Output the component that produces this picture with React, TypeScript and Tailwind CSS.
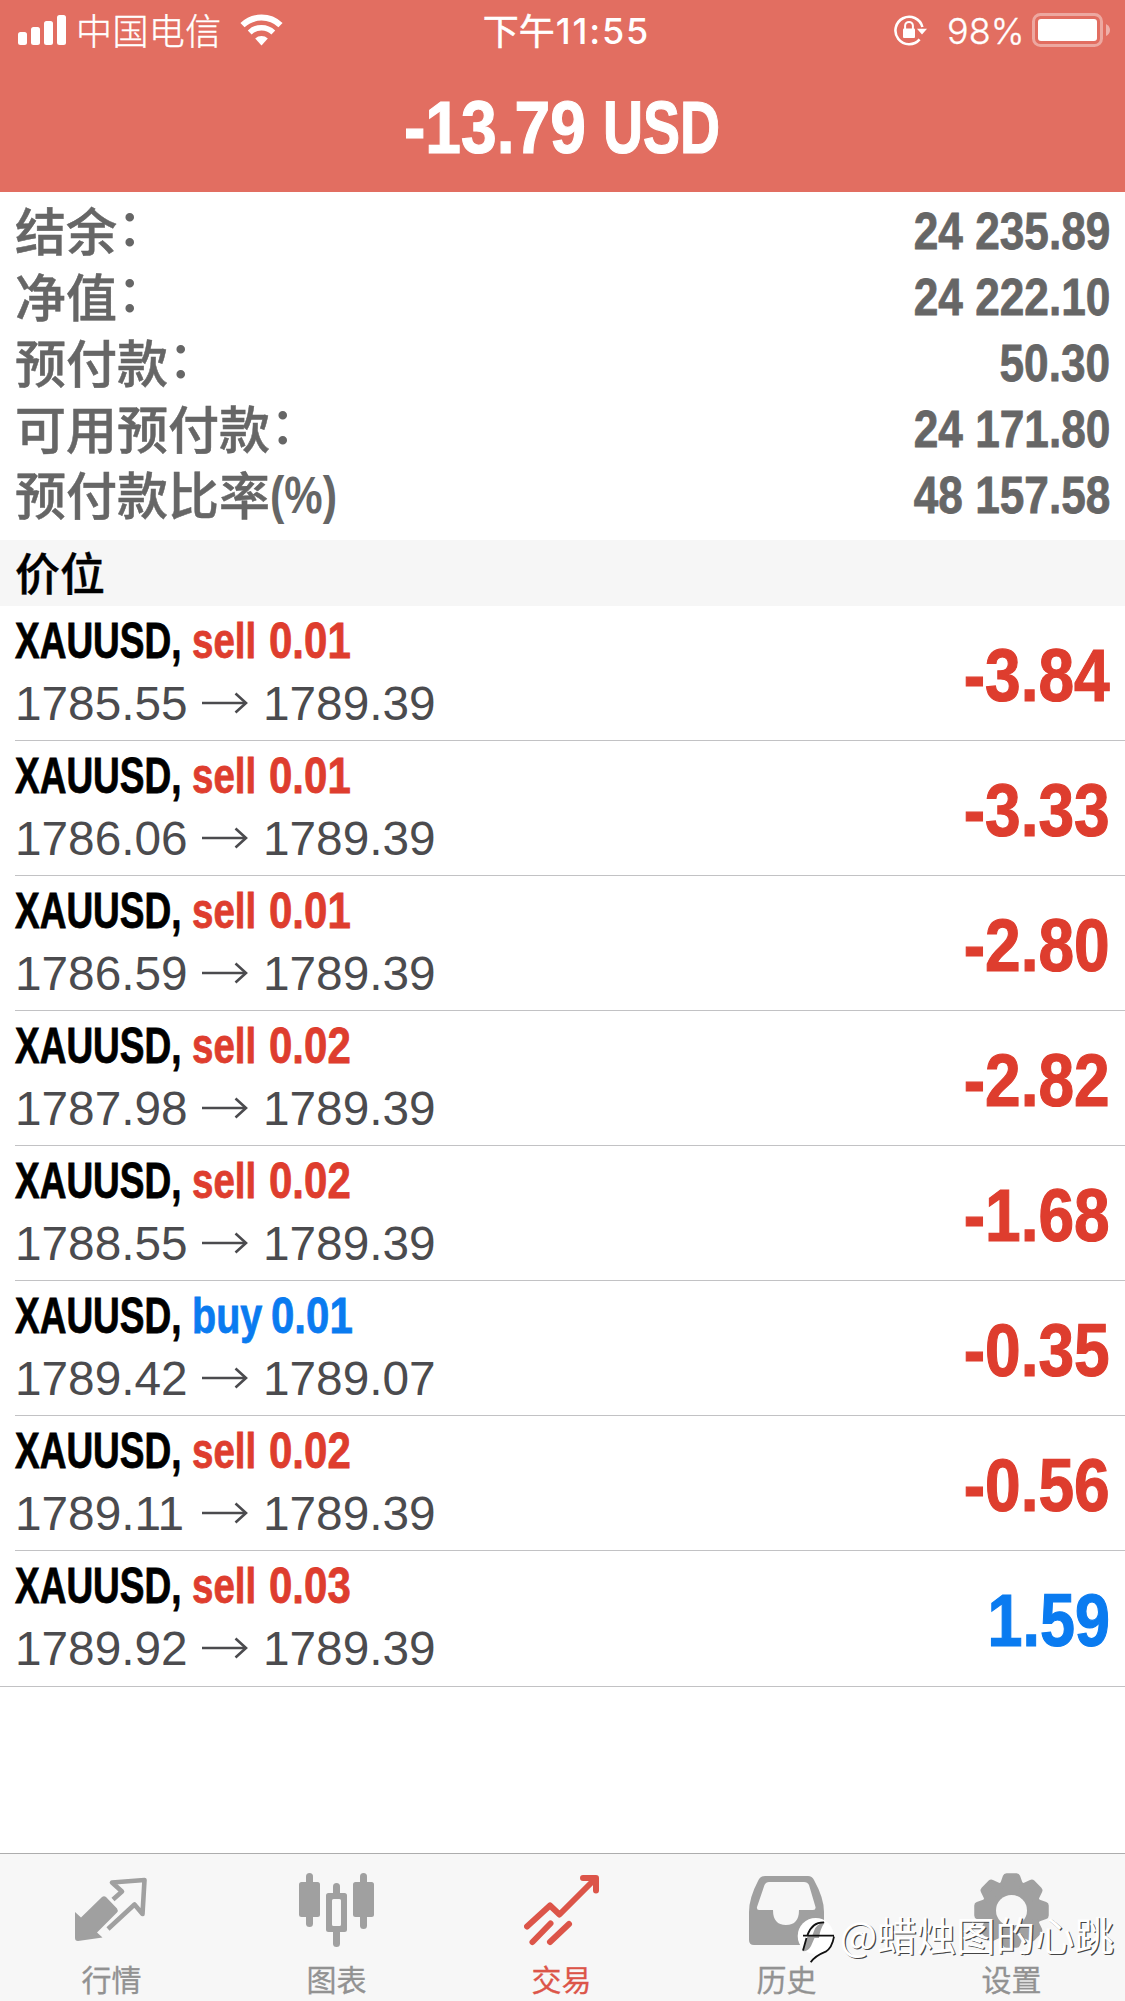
import React from "react";
import clsx from "clsx";

type Side = "sell" | "buy";

interface Position {
  side: Side;
  volume: string;
  open: string;
  current: string;
  profit: string;
}

const SUMMARY = [
  { label: "结余", suffix: "：", value: "24 235.89" },
  { label: "净值", suffix: "：", value: "24 222.10" },
  { label: "预付款", suffix: "：", value: "50.30" },
  { label: "可用预付款", suffix: "：", value: "24 171.80" },
  { label: "预付款比率", suffix: "(%)", value: "48 157.58" },
];

const POSITIONS: Position[] = [
  { side: "sell", volume: "0.01", open: "1785.55", current: "1789.39", profit: "-3.84" },
  { side: "sell", volume: "0.01", open: "1786.06", current: "1789.39", profit: "-3.33" },
  { side: "sell", volume: "0.01", open: "1786.59", current: "1789.39", profit: "-2.80" },
  { side: "sell", volume: "0.02", open: "1787.98", current: "1789.39", profit: "-2.82" },
  { side: "sell", volume: "0.02", open: "1788.55", current: "1789.39", profit: "-1.68" },
  { side: "buy", volume: "0.01", open: "1789.42", current: "1789.07", profit: "-0.35" },
  { side: "sell", volume: "0.02", open: "1789.11", current: "1789.39", profit: "-0.56" },
  { side: "sell", volume: "0.03", open: "1789.92", current: "1789.39", profit: "1.59" },
];

const StatusBar = () => (
  <div className="flex h-[60px] items-start justify-between pt-[13px]">
    <div className="flex w-[400px] items-start pl-[18px]">
      <svg width="49" height="34" viewBox="0 0 49 34" fill="#fff">
        <rect x="0" y="19" width="9" height="13" rx="2.5" />
        <rect x="13" y="14" width="9" height="18" rx="2.5" />
        <rect x="26" y="8" width="9" height="24" rx="2.5" />
        <rect x="39" y="2" width="9" height="30" rx="2.5" />
      </svg>
      <span className="-mt-[2px] ml-[9px] text-[36px] font-light leading-[36px] tracking-[0.4px] [-webkit-text-stroke:0.4px]">
        中国电信
      </span>
      <svg className="ml-[18px]" width="43" height="34" viewBox="0 0 43 34">
        <path d="M2.5 12.2 A27.5 27.5 0 0 1 40.5 12.2" stroke="#fff" strokeWidth="6" fill="none" />
        <path d="M9.7 19.4 A17 17 0 0 1 33.3 19.4" stroke="#fff" strokeWidth="5.5" fill="none" />
        <path d="M21.5 32.5 L15.2 25.6 A9.2 9.2 0 0 1 27.8 25.6 Z" fill="#fff" />
      </svg>
    </div>
    <div className="flex items-start pl-[8px] leading-[36px]">
      <span className="-mt-[2px] text-[36px] [-webkit-text-stroke:0.5px]">下午</span>
      <span className="ml-px font-['Inter'] text-[36px] font-medium tracking-[1.8px]">11:55</span>
    </div>
    <div className="flex w-[400px] items-start justify-end pr-[14px]">
      <svg width="36" height="34" viewBox="0 0 36 34">
        <path d="M26.6 26.4 A13.7 13.7 0 1 1 29.4 14" stroke="#fff" strokeWidth="2.6" fill="none" />
        <path d="M24 15.8 H34 L29 21.5 Z" fill="#fff" />
        <rect x="10" y="15.5" width="12" height="9.5" rx="1" fill="#fff" />
        <path d="M12.1 16 V12.8 A3.9 3.9 0 0 1 19.9 12.8 V16" stroke="#fff" strokeWidth="2" fill="none" />
      </svg>
      <span className="ml-[18px] w-[78px] font-['Inter'] text-[36px] font-light leading-[36px] [-webkit-text-stroke:0.3px]">
        98%
      </span>
      <svg className="ml-[7px]" width="79" height="34" viewBox="0 0 79 34">
        <rect x="1.5" y="1.5" width="68" height="31" rx="7" stroke="#fff" strokeOpacity="0.4" strokeWidth="3" fill="none" />
        <rect x="6" y="6" width="59" height="22" rx="3" fill="#fff" />
        <path d="M74 11 Q78 13 78 17 Q78 21 74 23 Z" fill="#fff" fillOpacity="0.45" />
      </svg>
    </div>
  </div>
);

const Header = () => (
  <header className="h-[192px] shrink-0 bg-[#e26e61] text-white">
    <StatusBar />
    <div className="flex h-[134px] justify-start pl-[404px] font-['Liberation_Sans'] text-[75px] font-bold leading-[134px] [-webkit-text-stroke:1.2px]">
      <span className="w-[199px] origin-left scale-x-[0.855] whitespace-nowrap">-13.79</span>
      <span className="origin-left scale-x-[0.74] whitespace-nowrap">USD</span>
    </div>
  </header>
);

const Summary = () => (
  <section className="h-[348px] shrink-0 pt-[6px] text-[#666]">
    {SUMMARY.map((row) => (
      <div key={row.label} className="flex h-[66px] items-start justify-between px-[15px]">
        <div className="flex whitespace-nowrap text-[51px] font-medium">
          <span className="leading-[63px] [-webkit-text-stroke:0.5px]">{row.label}</span>
          {row.suffix === "：" ? (
            <span className="leading-[53px]">：</span>
          ) : (
            <span className="origin-left scale-x-[0.845] font-['Liberation_Sans'] font-bold leading-[67px]">
              {row.suffix}
            </span>
          )}
        </div>
        <span className="origin-right scale-x-[0.85] font-['Liberation_Sans'] text-[52px] font-bold leading-[66px] [-webkit-text-stroke:0.8px]">
          {row.value}
        </span>
      </div>
    ))}
  </section>
);

const PositionRow = ({ position, last }: { position: Position; last: boolean }) => {
  const profitable = !position.profit.startsWith("-");
  return (
    <li className={clsx(last ? "h-[136px]" : "h-[135px] pl-[15px]")}>
      <div
        className={clsx(
          "flex h-full justify-between border-b border-[#c2c2c4] pr-[15px] font-['Liberation_Sans']",
          last && "pl-[15px]"
        )}
      >
        <div className="pt-[6px]">
          <div className="flex h-[58px] whitespace-nowrap text-[50px] font-bold leading-[58px] [-webkit-text-stroke:0.8px]">
            <span className="w-[177px] origin-left scale-x-[0.74] text-black">XAUUSD,</span>
            <span
              className={clsx(
                "origin-left",
                position.side === "buy"
                  ? "w-[79px] scale-x-[0.79] text-[#0a7bf0]"
                  : "w-[77px] scale-x-[0.77] text-[#de3d2e]"
              )}
            >
              {position.side}
            </span>
            <span
              className={clsx(
                "origin-left scale-x-[0.84]",
                position.side === "buy" ? "text-[#0a7bf0]" : "text-[#de3d2e]"
              )}
            >
              {position.volume}
            </span>
          </div>
          <div className="mt-[4px] flex h-[60px] items-center text-[48px] leading-[60px] text-[#4b4b4e]">
            <span className="w-[187px] origin-left scale-x-[0.995]">{position.open}</span>
            <svg className="-mt-[2px]" width="46" height="22" viewBox="0 0 46 22" fill="none" stroke="#4b4b4e" strokeWidth="2.6">
              <path d="M0 11 H44" />
              <path d="M33.5 1.5 L44 11 L33.5 20.5" />
            </svg>
            <span className="ml-[15px] origin-left scale-x-[0.995]">{position.current}</span>
          </div>
        </div>
        <span
          className={clsx(
            "origin-right text-[74px] font-bold leading-[139px] [-webkit-text-stroke:1.2px]",
            profitable ? "scale-x-[0.85] text-[#0a7bf0]" : "scale-x-[0.865] text-[#de3d2e]"
          )}
        >
          {position.profit}
        </span>
      </div>
    </li>
  );
};

const QuotesIcon = () => (
  <svg width="75" height="75" viewBox="-1 0 75 75" fill="none">
    <path d="M0 39 L6 44.5 L27 24 Q29 22.5 31 24 L42 35.5 Q43.5 37.5 42 39.5 L22 59.5 L27.5 64.5 L3 68 Q0 68 0 65 Z" fill="#a0a0a0" />
    <path d="M38 26.5 L47 18.5 L37 9.5 L69.5 7 L67.5 41 L59.5 31.5 L33 56" stroke="#a0a0a0" strokeWidth="4.6" strokeLinejoin="round" />
  </svg>
);

const ChartIcon = () => (
  <svg width="75" height="75" viewBox="0 0 75 75" fill="#a0a0a0">
    <rect x="7" y="0" width="7" height="54" rx="3.5" />
    <rect x="0" y="9" width="21" height="35" rx="2.5" />
    <rect x="34" y="10" width="7" height="14" rx="3.5" />
    <rect x="34" y="55" width="7" height="19" rx="3.5" />
    <path
      fillRule="evenodd"
      d="M29.5 20 H45.5 Q48 20 48 22.5 V56.5 Q48 59 45.5 59 H29.5 Q27 59 27 56.5 V22.5 Q27 20 29.5 20 Z M33 27.5 V51.5 Q33 53 34.5 53 H40.5 Q42 53 42 51.5 V27.5 Q42 26 40.5 26 H34.5 Q33 26 33 27.5 Z"
    />
    <rect x="61" y="0" width="7" height="56" rx="3.5" />
    <rect x="54" y="9" width="21" height="35" rx="2.5" />
  </svg>
);

const TradeIcon = () => (
  <svg width="75" height="75" viewBox="0 0 75 75" fill="none" stroke="#dc5549" strokeWidth="6" strokeLinecap="round" strokeLinejoin="round">
    <path d="M3 53.5 L26 32.5 L35.5 41.5 L71 6" />
    <path d="M59 5 H72 V17.5" />
    <path d="M26.5 50.5 L8.5 69" />
    <path d="M45 51 L26 69" />
  </svg>
);

const HistoryIcon = () => (
  <svg width="75" height="75" viewBox="0 0 75 75">
    <path
      fillRule="evenodd"
      fill="#a0a0a0"
      d="M16 3 H59 Q63 3 65 7 Q75 25 75 39 V67 Q75 72 70 72 H5 Q0 72 0 67 V39 Q0 25 9 8 Q11 3 16 3 Z M20 9 Q17 9 15.5 12 L8 34 Q7.5 37 10 37 H24 Q24 52 37 52 Q50 52 50 37 H64 Q67 37 66.5 34 L60 12 Q58.5 9 55 9 Z"
    />
  </svg>
);

const GearIcon = () => (
  <svg width="75" height="75" viewBox="-37.5 -37.5 75 75">
    <circle r="30" fill="#a0a0a0" />
    {[0, 45, 90, 135, 180, 225, 270, 315].map((angle) => (
      <path
        key={angle}
        d="M-8 -25 L-5 -33.5 H5 L8 -25 Z"
        transform={`rotate(${angle})`}
        fill="#a0a0a0"
        stroke="#a0a0a0"
        strokeWidth="7.5"
        strokeLinejoin="round"
      />
    ))}
    <circle r="15.5" fill="#f7f7f7" />
  </svg>
);

const TABS = [
  { name: "行情", icon: QuotesIcon },
  { name: "图表", icon: ChartIcon },
  { name: "交易", icon: TradeIcon, active: true },
  { name: "历史", icon: HistoryIcon },
  { name: "设置", icon: GearIcon },
];

const TabBar = () => (
  <nav className="mt-auto grid h-[148px] grid-cols-5 border-t border-[#adadad] bg-[#f7f7f7]">
    {TABS.map((tab) => (
      <div key={tab.name} className="flex flex-col items-center pr-[2px] pt-[19px]">
        <tab.icon />
        <span
          className={clsx(
            "mt-[10px] text-[30px] leading-[40px] [-webkit-text-stroke:0.3px]",
            tab.active ? "text-[#dc5549]" : "text-[#929292]"
          )}
        >
          {tab.name}
        </span>
      </div>
    ))}
  </nav>
);

const Watermark = () => (
  <div className="absolute bottom-[36px] right-[11px] flex items-start text-white">
    <svg width="42" height="48" viewBox="0 0 42 48">
      <circle cx="18.7" cy="19" r="18" fill="#fff" />
      <path d="M37 20 Q35 34 24 37.5 Q18 39 14 45 Q14 38 24 34 Z" fill="#fff" />
      <path d="M28 5 Q19 7 17 14 L15.5 18 H11 L5.5 34 Q11 35 14 29 L17.5 21 H22 Q23 12 28 5 Z" fill="#a0a0a0" />
      <path d="M27 5.3 Q15 5 10.5 18 M6 18.7 H37 M37 19.7 Q35 31 28.7 34.7 Q18 39 13.7 45.3 M9.5 21 L6 33.5" stroke="#111" strokeWidth="1.8" fill="none" />
    </svg>
    <span className="-mt-[7px] ml-px whitespace-nowrap text-[39.5px] leading-[48px] [text-shadow:1.3px_1.3px_0.5px_#444]">
      @蜡烛图的心跳
    </span>
  </div>
);

const App = () => {
  return (
    <div className="relative flex h-[2001px] w-[1125px] flex-col overflow-hidden bg-white font-['Noto_Sans_CJK_SC',sans-serif]">
      <Header />
      <Summary />
      <div className="h-[66px] shrink-0 bg-[#f6f6f6] pl-[15px] text-[45px] font-medium leading-[63px] text-black [-webkit-text-stroke:0.4px]">
        价位
      </div>
      <ul>
        {POSITIONS.map((position, i) => (
          <PositionRow key={i} position={position} last={i === POSITIONS.length - 1} />
        ))}
      </ul>
      <TabBar />
      <Watermark />
    </div>
  );
};

export default App;
